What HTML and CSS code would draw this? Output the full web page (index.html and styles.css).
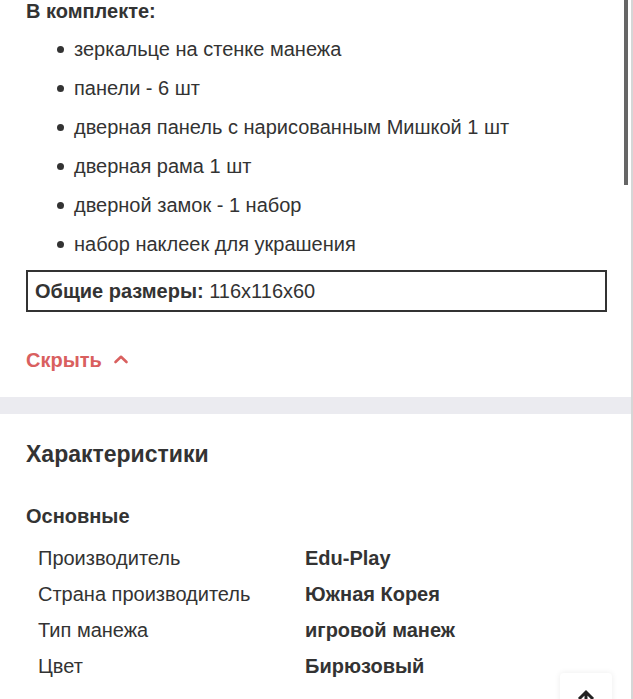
FILE: index.html
```html
<!DOCTYPE html>
<html lang="ru">
<head>
<meta charset="utf-8">
<link rel="stylesheet" href="styles.css">
</head>
<body>
<div class="page">
  <section class="card desc">
    <h3 class="kit-title">В комплекте:</h3>
    <ul class="kit-list">
      <li>зеркальце на стенке манежа</li>
      <li>панели - 6 шт</li>
      <li>дверная панель с нарисованным Мишкой 1 шт</li>
      <li>дверная рама 1 шт</li>
      <li>дверной замок - 1 набор</li>
      <li>набор наклеек для украшения</li>
    </ul>
    <div class="sizes"><b>Общие размеры:</b> 116x116x60</div>
    <a class="hide-link">Скрыть
      <svg class="chev" width="16" height="10" viewBox="0 0 16 10"><path d="M2.5 8 L8 2.8 L13.5 8" fill="none" stroke="#d9605f" stroke-width="2.6" stroke-linecap="round" stroke-linejoin="round"/></svg>
    </a>
  </section>
  <div class="gap"></div>
  <section class="card specs">
    <h2 class="specs-title">Характеристики</h2>
    <h4 class="group-title">Основные</h4>
    <dl class="spec-list">
      <div class="row"><dt>Производитель</dt><dd>Edu-Play</dd></div>
      <div class="row"><dt>Страна производитель</dt><dd>Южная Корея</dd></div>
      <div class="row"><dt>Тип манежа</dt><dd>игровой манеж</dd></div>
      <div class="row"><dt>Цвет</dt><dd>Бирюзовый</dd></div>
    </dl>
  </section>
  <button class="to-top" aria-label="Наверх">
    <svg width="22" height="22" viewBox="0 0 22 22"><path d="M11 20 V4 M4 11 L11 4 L18 11" fill="none" stroke="#222" stroke-width="3" stroke-linejoin="miter"/></svg>
  </button>
  <div class="scroll-thumb"></div>
</div>
</body>
</html>
```
FILE: styles.css
```css
* { box-sizing: border-box; }
html, body { margin: 0; padding: 0; }
body {
  background: #fff;
  font-family: "Liberation Sans", Arial, sans-serif;
  color: #333;
  width: 633px;
  height: 699px;
  overflow: hidden;
}
.page {
  position: relative;
  width: 633px;
  height: 699px;
  border-right: 2px solid #d6d6d6;
}
.card { background: #fff; padding: 0 26px 0 26px; }
.desc { padding-bottom: 26px; }
.kit-title {
  margin: 0;
  font-size: 20px;
  line-height: 22px;
  font-weight: 700;
}
.kit-list {
  list-style: none;
  margin: 8px 0 0 0;
  padding: 0 0 0 31px;
}
.kit-list li {
  position: relative;
  font-size: 20px;
  line-height: 22px;
  padding: 8px 0 9px 17px;
}
.kit-list li::before {
  content: "";
  position: absolute;
  left: 0;
  top: 16px;
  width: 7px;
  height: 7px;
  border-radius: 50%;
  background: #333;
}
.sizes {
  margin-top: 6px;
  border: 2px solid #333;
  height: 42px;
  padding: 0 7px;
  font-size: 20px;
  line-height: 38px;
  width: 581px;
}
.sizes b { font-weight: 700; }
.hide-link {
  display: flex;
  align-items: center;
  gap: 11px;
  margin-top: 37px;
  color: #d9605f;
  font-weight: 700;
  font-size: 20px;
  line-height: 22px;
}
.chev { margin-top: -2px; }
.gap {
  height: 17px;
  background: #ebebf0;
}
.specs { padding-top: 27px; }
.specs-title {
  margin: 0;
  font-size: 23px;
  line-height: 26px;
  font-weight: 700;
}
.group-title {
  margin: 37px 0 0 0;
  font-size: 20px;
  line-height: 24px;
  font-weight: 700;
}
.spec-list { margin: 12px 0 0 0; padding-left: 12px; }
.row {
  display: grid;
  grid-template-columns: 267px 1fr;
  font-size: 20px;
  line-height: 22px;
  padding: 7px 0;
}
.row dt { margin: 0; }
.row dd { margin: 0; font-weight: 700; }
.to-top {
  position: absolute;
  left: 560px;
  top: 673px;
  width: 52px;
  height: 52px;
  border: none;
  border-radius: 4px;
  background: #fff;
  box-shadow: 0 0 6px rgba(0,0,0,0.08);
  display: flex;
  justify-content: center;
  padding: 15px 0 0 0;
  z-index: 1;
}
.scroll-thumb {
  position: absolute;
  right: 3px;
  top: 0;
  width: 4px;
  height: 185px;
  background: #666;
  z-index: 2;
}
```
